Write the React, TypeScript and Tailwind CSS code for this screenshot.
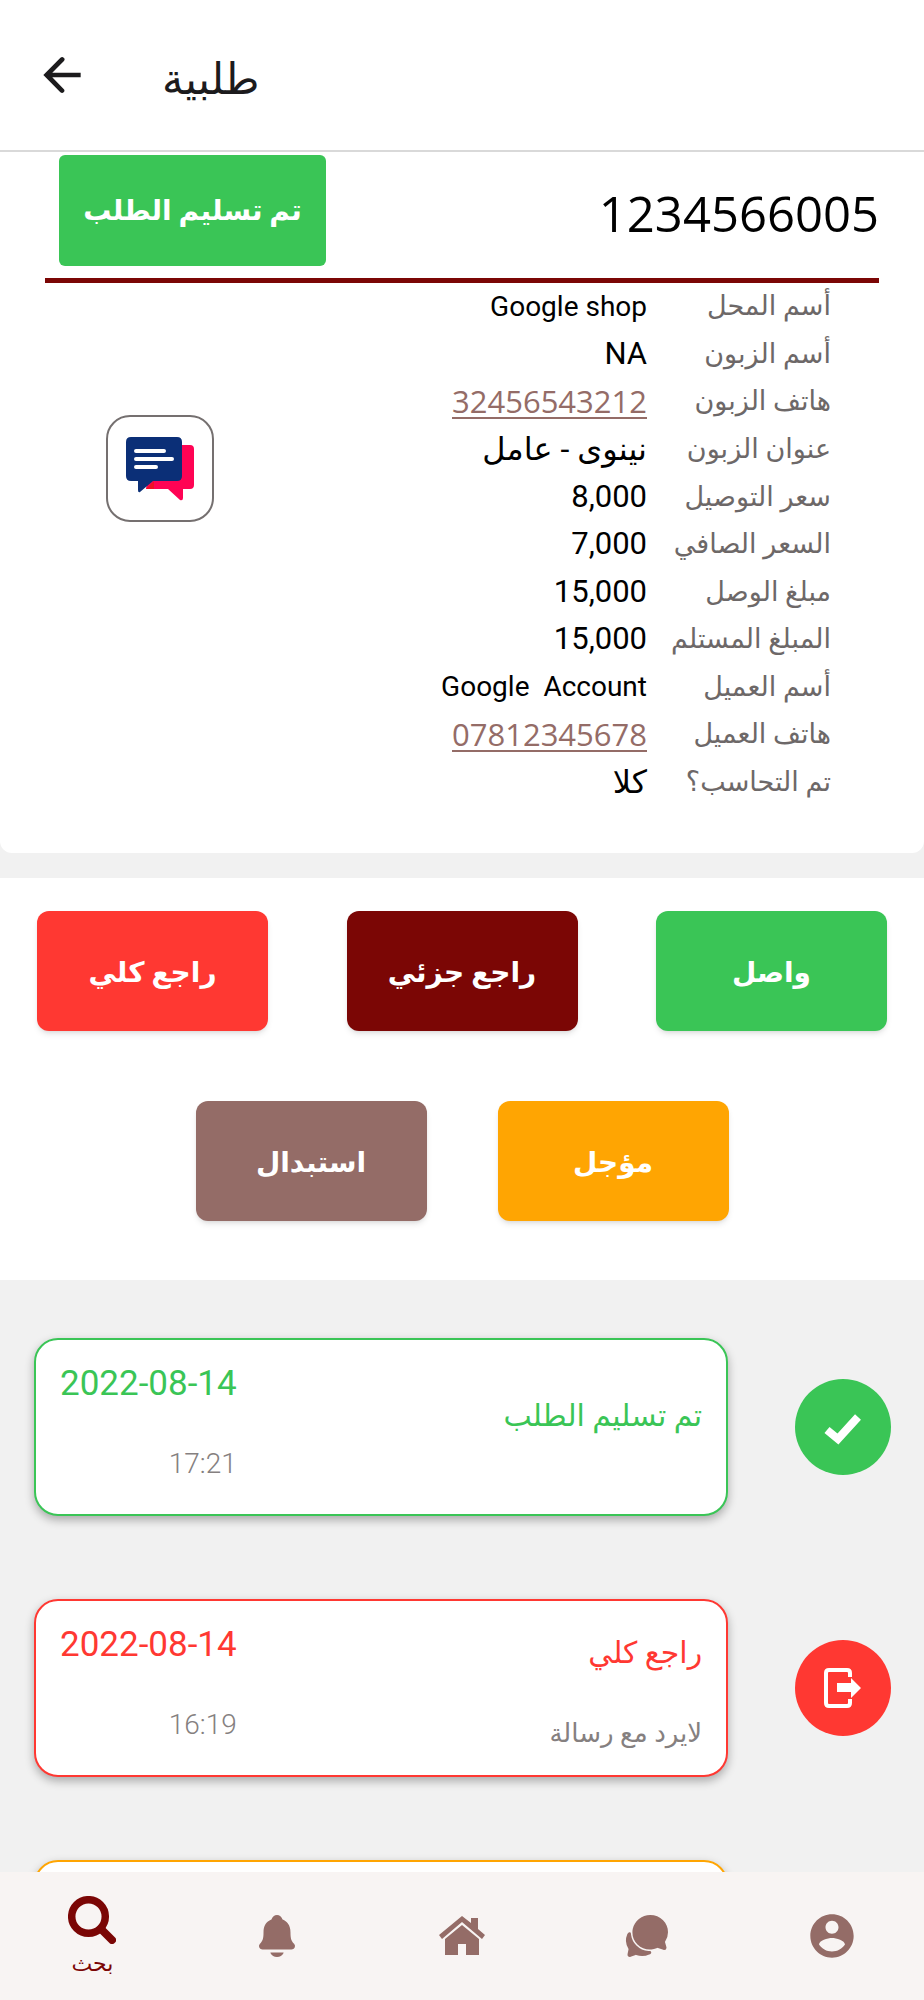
import type { ReactNode } from "react";
import { IoChatbubbles, IoNotifications } from "react-icons/io5";

type Detail = { label: string; value: string; kind?: "phone" | "arabic" | "latin" };

const details: Detail[] = [
  { label: "أسم المحل", value: "Google shop", kind: "latin" },
  { label: "أسم الزبون", value: "NA" },
  { label: "هاتف الزبون", value: "32456543212", kind: "phone" },
  { label: "عنوان الزبون", value: "نينوى - عامل", kind: "arabic" },
  { label: "سعر التوصيل", value: "8,000" },
  { label: "السعر الصافي", value: "7,000" },
  { label: "مبلغ الوصل", value: "15,000" },
  { label: "المبلغ المستلم", value: "15,000" },
  { label: "أسم العميل", value: "Google  Account", kind: "latin" },
  { label: "هاتف العميل", value: "07812345678", kind: "phone" },
  { label: "تم التحاسب؟", value: "كلا", kind: "arabic" },
];

function DetailValue({ item }: { item: Detail }) {
  if (item.kind === "phone") {
    return (
      <a
        href={`tel:${item.value}`}
        className="font-['Open_Sans',sans-serif] text-[31px] text-[#946c67] underline decoration-2 underline-offset-4"
      >
        {item.value}
      </a>
    );
  }
  if (item.kind === "arabic") return <span className="text-[32px]">{item.value}</span>;
  if (item.kind === "latin") return <span className="text-[28px]">{item.value}</span>;
  return <span className="text-[31px]">{item.value}</span>;
}

function ActionButton({ color, children }: { color: string; children: ReactNode }) {
  return (
    <button
      className={`h-30 w-[231px] rounded-xl pt-1 text-[28px] font-bold text-white shadow-md cursor-pointer ${color}`}
    >
      {children}
    </button>
  );
}

type HistoryItemProps = {
  title?: string;
  note?: string;
  date?: string;
  time?: string;
  border: string;
  text?: string;
  bg: string;
  icon?: ReactNode;
};

function HistoryItem({ title, note, date, time, border, text = "", bg, icon }: HistoryItemProps) {
  return (
    <li className="flex shrink-0 items-center justify-between">
      <div className={`w-24 h-24 shrink-0 rounded-full flex items-center justify-center ${bg}`}>{icon}</div>
      <div
        className={`flex h-[178px] w-[81%] justify-between rounded-3xl border-2 bg-white px-6 shadow-[0_4px_10px_rgba(0,0,0,0.3)] ${border}`}
      >
        {title && (
          <div className={`flex flex-col ${note ? "gap-10 pt-8" : "pt-14"}`}>
            <h3 className={`text-[30px] leading-10 ${text}`}>{title}</h3>
            {note && <p className="text-[26px] leading-10 text-[#858080]">{note}</p>}
          </div>
        )}
        {date && (
          <div dir="ltr" className="flex flex-col gap-10 pt-6 text-right">
            <span className={`text-[35px] leading-10 ${text}`}>{date}</span>
            <time className="text-[28px] leading-10 font-light text-[#858080]">{time}</time>
          </div>
        )}
      </div>
    </li>
  );
}

function NavButton({ label, children }: { label: string; children: ReactNode }) {
  return (
    <button aria-label={label} className="flex flex-1 items-center justify-center text-[#946c67] cursor-pointer">
      {children}
    </button>
  );
}

export default function App() {
  return (
    <div
      dir="rtl"
      className="flex h-screen flex-col overflow-hidden bg-[#f1f1f1] font-[Roboto,'DejaVu_Sans',sans-serif] text-black"
    >
      {/* Header */}
      <header dir="ltr" className="flex h-[152px] shrink-0 items-center gap-18 border-b-2 border-[#d9d9d9] bg-white px-[34px]">
        <button aria-label="رجوع" className="cursor-pointer text-[#1c1b1d]">
          <svg className="h-14 w-14" viewBox="0 0 24 24" fill="currentColor">
            <path d="M20 11H7.83l4.9-4.9c.55-.55.55-1.1 0-1.5-.4-.4-.9-.4-1.4 0L4 12l7.3 7.4c.5.4 1 .4 1.4 0 .5-.4.5-.9 0-1.4L7.83 13H20v-2z" />
          </svg>
        </button>
        <h1 dir="rtl" className="pt-2 text-[43px] leading-12 text-[#1c1b1d]">طلبية</h1>
      </header>

      <main className="flex min-h-0 flex-1 flex-col overflow-hidden">
        {/* Order card */}
        <section className="h-[701px] shrink-0 rounded-b-xl bg-white px-[45px] pt-[3px]">
          <div className="flex h-[128px] items-start justify-between border-b-[5px] border-[#7b0605] pe-[14px]">
            <h2 className="font-['Open_Sans',sans-serif] text-[49px] leading-[116px]">1234566005</h2>
            <button className="h-[111px] w-[267px] rounded-md bg-[#3ac556] text-[28px] font-bold text-white cursor-pointer">
              تم تسليم الطلب
            </button>
          </div>
          <div className="flex items-start justify-between ps-12 pe-[61px]">
            <dl className="flex h-[523px] flex-col justify-between">
              {details.map((item) => (
                <div key={item.label} className="flex h-12 items-center">
                  <dt className="w-[184px] text-[27px] whitespace-nowrap text-[#6d6868]">{item.label}</dt>
                  <dd className="whitespace-pre">
                    <DetailValue item={item} />
                  </dd>
                </div>
              ))}
            </dl>
            <button
              aria-label="المحادثة"
              className="mt-33 flex h-[107px] w-[108px] items-center justify-center rounded-3xl border-2 border-[#757070] cursor-pointer"
            >
              <svg className="h-16 w-17" viewBox="0 0 68 64">
                <path d="M26 8h38q4 0 4 4v36q0 4-4 4h-7v9q0 3-3 2L42 52H20z" fill="#ff0354" />
                <path d="M20 52l8-8v8z" fill="#ee1226" />
                <path d="M5 0h46q5 0 5 5v34q0 5-5 5H27L14 55q-2 1-2-2v-9H5q-5 0-5-5V5q0-5 5-5z" fill="#0b2f77" />
                <path d="M10 14h28M10 22h36M10 30h20" stroke="#fff" strokeWidth="4" strokeLinecap="round" />
              </svg>
            </button>
          </div>
        </section>

        {/* Actions */}
        <section className="mt-[25px] flex h-[402px] shrink-0 flex-col gap-[70px] bg-white px-[37px] pt-[33px]">
          <div className="flex justify-between">
            <ActionButton color="bg-[#3ac556]">واصل</ActionButton>
            <ActionButton color="bg-[#7b0605]">راجع جزئي</ActionButton>
            <ActionButton color="bg-[#ff3832]">راجع كلي</ActionButton>
          </div>
          <div className="flex justify-center gap-[71px]">
            <ActionButton color="bg-[#ffa502]">مؤجل</ActionButton>
            <ActionButton color="bg-[#946c67]">استبدال</ActionButton>
          </div>
        </section>

        {/* History */}
        <ul className="flex flex-col gap-[83px] ps-[33px] pe-[34px] pt-[58px]">
          <HistoryItem
            title="تم تسليم الطلب"
            date="2022-08-14"
            time="17:21"
            border="border-[#3ac556]"
            text="text-[#3ac556]"
            bg="bg-[#3ac556]"
            icon={
              <svg className="h-10 w-10" viewBox="0 0 40 40">
                <path d="M4 23l11 9 20-22" stroke="#fff" strokeWidth="8" fill="none" />
              </svg>
            }
          />
          <HistoryItem
            title="راجع كلي"
            note="لايرد مع رسالة"
            date="2022-08-14"
            time="16:19"
            border="border-[#ff3832]"
            text="text-[#ff3832]"
            bg="bg-[#ff3832]"
            icon={
              <svg className="h-10 w-10" viewBox="0 0 40 40">
                <path d="M27 9V5q0-3-3-3H6Q3 2 3 5v30q0 3 3 3h18q3 0 3-3v-4" stroke="#fff" strokeWidth="4" fill="none" />
                <path d="M14 15h14v-5l10 10-10 10v-6H14z" fill="#fff" />
              </svg>
            }
          />
          <HistoryItem border="border-[#ffa502]" bg="bg-[#ffa502]" />
        </ul>
      </main>

      {/* Bottom tabs */}
      <nav dir="ltr" className="flex h-32 shrink-0 bg-[#f8f4f3]">
        <button className="flex flex-1 flex-col items-center gap-2 pt-6 text-[#7b0605] cursor-pointer">
          <svg className="h-12 w-12" viewBox="0 0 48 48" fill="none" stroke="currentColor" strokeWidth="7.5">
            <circle cx="20.5" cy="20.5" r="16.8" />
            <path d="M33 33l11 11" strokeWidth="8" strokeLinecap="round" />
          </svg>
          <span dir="rtl" className="text-[22px] leading-6">بحث</span>
        </button>
        <NavButton label="الإشعارات">
          <IoNotifications className="h-12 w-12" />
        </NavButton>
        <NavButton label="الرئيسية">
          <svg className="h-10 w-12" viewBox="0 0 48 40" fill="currentColor">
            <path d="M24 0l9 7V2h7v11l7 6-3 4L24 6 4 23l-3-4z" />
            <path d="M24 9l17 14v16H28V28h-8v11H7V23z" />
          </svg>
        </NavButton>
        <NavButton label="الرسائل">
          <IoChatbubbles className="h-12 w-12" />
        </NavButton>
        <NavButton label="الحساب">
          <svg className="h-13 w-13" viewBox="0 0 24 24" fill="currentColor">
            <path d="M12 2C6.48 2 2 6.48 2 12s4.48 10 10 10 10-4.48 10-10S17.52 2 12 2zm0 3c1.66 0 3 1.34 3 3s-1.34 3-3 3-3-1.34-3-3 1.34-3 3-3zm0 14.2c-2.5 0-4.71-1.28-6-3.22.03-1.99 4-3.08 6-3.08 1.99 0 5.97 1.09 6 3.08-1.29 1.94-3.5 3.22-6 3.22z" />
          </svg>
        </NavButton>
      </nav>
    </div>
  );
}
